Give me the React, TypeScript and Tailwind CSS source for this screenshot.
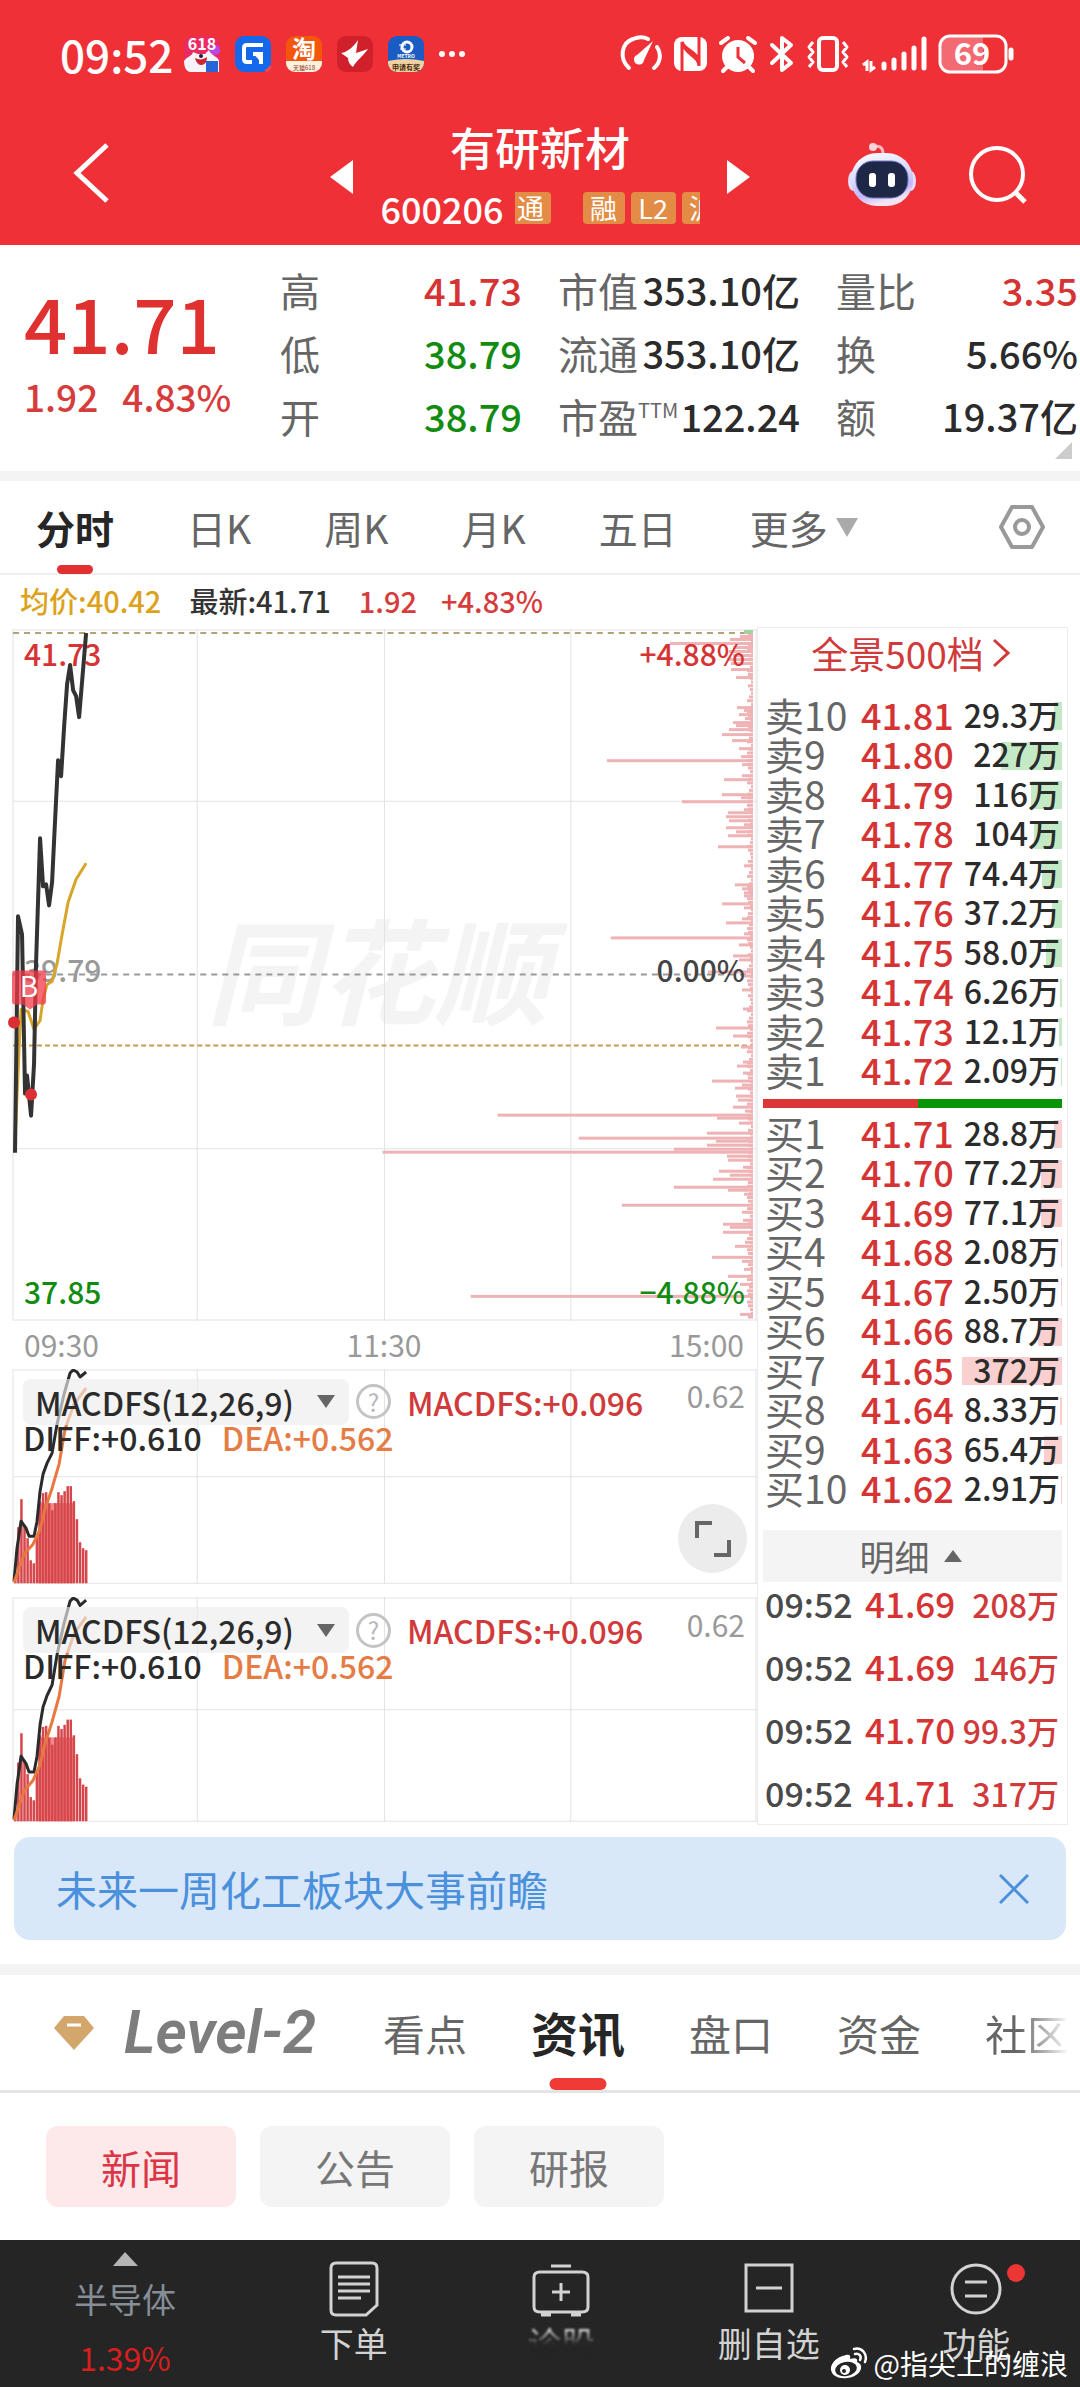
import React from "react";

/* ---------- data ---------- */

type Tone = "up" | "down" | "ink";

const toneClass: Record<Tone, string> = {
  up: "text-[#d63434]",
  down: "text-[#118c11]",
  ink: "text-[#2b2b2b]",
};

const stats: { label: string; sup?: string; value: string; tone: Tone }[][] = [
  [
    { label: "高", value: "41.73", tone: "up" },
    { label: "低", value: "38.79", tone: "down" },
    { label: "开", value: "38.79", tone: "down" },
  ],
  [
    { label: "市值", value: "353.10亿", tone: "ink" },
    { label: "流通", value: "353.10亿", tone: "ink" },
    { label: "市盈", sup: "TTM", value: "122.24", tone: "ink" },
  ],
  [
    { label: "量比", value: "3.35", tone: "up" },
    { label: "换", value: "5.66%", tone: "ink" },
    { label: "额", value: "19.37亿", tone: "ink" },
  ],
];

type Order = [string, string, string];

const asks: Order[] = [
  ["卖10", "41.81", "29.3"],
  ["卖9", "41.80", "227"],
  ["卖8", "41.79", "116"],
  ["卖7", "41.78", "104"],
  ["卖6", "41.77", "74.4"],
  ["卖5", "41.76", "37.2"],
  ["卖4", "41.75", "58.0"],
  ["卖3", "41.74", "6.26"],
  ["卖2", "41.73", "12.1"],
  ["卖1", "41.72", "2.09"],
];

const bids: Order[] = [
  ["买1", "41.71", "28.8"],
  ["买2", "41.70", "77.2"],
  ["买3", "41.69", "77.1"],
  ["买4", "41.68", "2.08"],
  ["买5", "41.67", "2.50"],
  ["买6", "41.66", "88.7"],
  ["买7", "41.65", "372"],
  ["买8", "41.64", "8.33"],
  ["买9", "41.63", "65.4"],
  ["买10", "41.62", "2.91"],
];

const trades: Order[] = [
  ["09:52", "41.69", "208"],
  ["09:52", "41.69", "146"],
  ["09:52", "41.70", "99.3"],
  ["09:52", "41.71", "317"],
];

/* Price-level turnover: [y, length] inside the 756 x 691 chart. */
const profile: [number, number][] = [
  [7, 13], [10, 23], [14, 83], [18, 20], [22, 24], [26, 20], [30, 26], [34, 22], [40, 22], [48, 17],
  [78, 16], [81, 9], [85, 14], [89, 8], [93, 20], [96, 17], [100, 24], [105, 31], [111, 21], [119, 14],
  [127, 12], [131, 146], [135, 11], [146, 11], [150, 29], [165, 31], [168, 12], [172, 71], [180, 9],
  [183, 25], [187, 27], [191, 24], [195, 9], [198, 27], [202, 17], [206, 25], [217, 35], [236, 9],
  [255, 18], [259, 11], [263, 9], [266, 9], [274, 31], [278, 9], [289, 11], [293, 27], [304, 9],
  [308, 142], [315, 14], [326, 20], [330, 14], [342, 45], [346, 10], [360, 11], [379, 10], [398, 37],
  [406, 20], [417, 12], [432, 10], [436, 16], [443, 10], [451, 41], [455, 11], [458, 18], [466, 17],
  [470, 15], [477, 20], [481, 8], [485, 255], [488, 36], [493, 14], [503, 46], [508, 174], [511, 37],
  [515, 46], [519, 79], [522, 370], [526, 26], [530, 25], [537, 10], [541, 34], [545, 23], [549, 40],
  [557, 79], [560, 25], [564, 9], [575, 131], [582, 11], [590, 10], [594, 30], [597, 23], [602, 30],
  [612, 8], [616, 18], [627, 41], [631, 11], [639, 9], [646, 25], [654, 13], [666, 282], [684, 13],
];

const minorLengths = [5, 3, 6, 2, 5, 4, 3, 6, 2];

const macdTops = [
  207, 158, 130, 156, 169, 191, 194, 168, 132, 124, 123, 134, 141, 134, 123, 126, 122, 117, 117, 132,
  150, 173, 179, 181,
];

/* ---------- small icons ---------- */

function StatusIcons() {
  return (
    <svg viewBox="0 0 394 40" className="h-10 w-[394px] shrink-0 overflow-visible" fill="none" stroke="white" aria-hidden="true">
      {/* speed gauge */}
      <path d="M9 34C-1 25 1 9 13 5C18 3 24 3 28 5M37 13C42 21 40 29 34 34" strokeWidth="4" strokeLinecap="round" />
      <path d="M33 7L24 26A5 5 0 1 1 17 21Z" fill="white" stroke="none" />
      {/* nfc */}
      <rect x="54" y="3" width="33" height="34" rx="8" fill="white" stroke="none" />
      <path d="M62 37V8C66 18 79 16 79 32M79 3V32M62 8C66 22 79 22 79 32" stroke="#f03037" strokeWidth="3" />
      {/* alarm */}
      <circle cx="118" cy="22" r="16" fill="white" stroke="none" />
      <path d="M101 9L108 4M135 9L128 4M107 33L103 37M129 33L133 37" strokeWidth="4" strokeLinecap="round" />
      <path d="M118 13V23L125 29" stroke="#f03037" strokeWidth="3" />
      {/* bluetooth */}
      <path d="M152 11L171 29L162 36V4L171 11L152 29" strokeWidth="4" strokeLinejoin="round" strokeLinecap="round" />
      {/* vibrate */}
      <rect x="199" y="4" width="18" height="32" rx="4" strokeWidth="4" />
      <path d="M193 8L189 13L193 18L189 23L193 28L189 33M223 8L227 13L223 18L227 23L223 28L227 33" strokeWidth="3" strokeLinejoin="round" />
      {/* data arrows and signal bars */}
      <path d="M243 31L247 28V37M251 27V36L255 33" strokeWidth="3" />
      <path d="M264 30V34M274 26V34M284 20V34M294 14V34M304 5V34" strokeWidth="5" strokeLinecap="round" />
      {/* battery */}
      <path d="M330 3H363V37H330A9 9 0 0 1 321 28V12A9 9 0 0 1 330 3Z" fill="#f46a72" stroke="none" />
      <rect x="320" y="2" width="66" height="36" rx="10" strokeWidth="3" />
      <path d="M391 16V24" strokeWidth="5" strokeLinecap="round" />
      <text x="352" y="31" textAnchor="middle" fill="white" stroke="none" fontSize="31" fontWeight="700">69</text>
    </svg>
  );
}

function AppBadges() {
  return (
    <div className="flex items-center gap-[15px]" aria-hidden="true">
      <svg viewBox="0 0 36 36" className="size-9 overflow-visible">
        <rect width="36" height="36" rx="9" fill="#ec2a62" />
        <circle cx="31" cy="14" r="5" fill="#b847e8" />
        <path d="M0 25C4 20 8 20 9 16L14 18H21L25 14C27 20 34 20 35 25V36H6C2 35 0 31 0 25Z" fill="#f7f3f8" />
        <text x="18" y="14" textAnchor="middle" fill="white" fontSize="16" fontWeight="700">618</text>
        <path d="M11 22C15 24 19 24 23 21C23 27 20 29 17 29C14 29 12 26 11 22Z" fill="#cf2434" />
        <circle cx="17" cy="20" r="2" fill="#222" />
        <rect x="22" y="25" width="12" height="11" fill="#2667d8" />
      </svg>
      <svg viewBox="0 0 36 36" className="size-9">
        <rect width="36" height="36" rx="9" fill="#1568ea" />
        <path d="M28 9H12Q9 9 9 12V23Q9 26 12 26H17M18 18H26V28" fill="none" stroke="white" strokeWidth="4" />
        <path d="M18 17H24V24Z" fill="white" />
        <path d="M29 35L36 29V33L33 36Z" fill="#f04755" />
      </svg>
      <svg viewBox="0 0 36 36" className="size-9 overflow-visible">
        <rect width="36" height="36" rx="9" fill="#f4560c" />
        <path d="M0 25H36V27A9 9 0 0 1 27 36H9A9 9 0 0 1 0 27Z" fill="#fff1df" />
        <text x="18" y="22" textAnchor="middle" fill="white" fontSize="24" fontWeight="700">淘</text>
        <text x="18" y="34" textAnchor="middle" fill="#8a3a1c" fontSize="6">天猫618</text>
      </svg>
      <svg viewBox="0 0 36 36" className="size-9">
        <rect width="36" height="36" rx="9" fill="#d0202c" />
        <path d="M21 4L19 17L31 13C26 20 19 25 16 31C13 29 11 26 11 22L4 17C11 16 17 10 21 4Z" fill="white" />
      </svg>
      <svg viewBox="0 0 36 36" className="size-9 overflow-visible">
        <rect width="36" height="36" rx="9" fill="#1a5cc4" />
        <path d="M0 25Q18 21 36 25V27A9 9 0 0 1 27 36H9A9 9 0 0 1 0 27Z" fill="#f0d2a0" />
        <circle cx="19" cy="11" r="5" fill="none" stroke="white" strokeWidth="3" />
        <path d="M11 9H18M12 13H18" stroke="white" strokeWidth="1" />
        <text x="18" y="22" textAnchor="middle" fill="white" fontSize="5" fontWeight="700">METRO</text>
        <text x="18" y="34" textAnchor="middle" fill="#4a2c10" fontSize="7" fontWeight="700">申请有奖</text>
      </svg>
      <svg viewBox="0 0 26 6" className="h-[6px] w-[26px]" fill="white">
        <circle cx="3" cy="3" r="3" />
        <circle cx="13" cy="3" r="3" />
        <circle cx="23" cy="3" r="3" />
      </svg>
    </div>
  );
}

function Robot() {
  return (
    <svg viewBox="0 0 70 66" className="h-[66px] w-[70px]" aria-hidden="true">
      <defs>
        <linearGradient id="shell" x1="0" y1="0" x2="0.3" y2="1">
          <stop offset="0" stopColor="#ffffff" />
          <stop offset="0.5" stopColor="#d9dcff" />
          <stop offset="0.8" stopColor="#c3b5f5" />
          <stop offset="1" stopColor="#f3e4f4" />
        </linearGradient>
      </defs>
      <path d="M25 5C32 3 36 5 36 12" fill="none" stroke="#f7b9c2" strokeWidth="3" />
      <circle cx="26" cy="5" r="4" fill="#fbd5da" />
      <ellipse cx="6" cy="39" rx="5" ry="10" fill="#e3dcfb" />
      <ellipse cx="64" cy="39" rx="5" ry="10" fill="#e3dcfb" />
      <rect x="4" y="11" width="62" height="53" rx="26" fill="url(#shell)" />
      <rect x="9" y="19" width="52" height="37" rx="17" fill="#1f2747" stroke="#6f78c8" strokeWidth="1" />
      <rect x="22" y="31" width="7" height="14" rx="3" fill="white" />
      <rect x="41" y="31" width="7" height="14" rx="3" fill="white" />
    </svg>
  );
}

/* ---------- sections ---------- */

function Header() {
  return (
    <header className="bg-[#f03037] text-white">
      <div className="flex h-[108px] items-center justify-between pr-[66px] pl-[60px]">
        <div className="flex items-center gap-[11px]">
          <span className="text-[44px] leading-[44px] font-medium">09:52</span>
          <AppBadges />
        </div>
        <StatusIcons />
      </div>
      <div className="grid h-[137px] grid-cols-[1fr_420px_1fr] items-center">
        <button aria-label="返回" className="justify-self-start pb-2 pl-[72px]">
          <svg viewBox="0 0 38 60" className="h-[60px] w-[38px]" fill="none" stroke="white" strokeWidth="5">
            <path d="M35 2L5 30L35 58" />
          </svg>
        </button>
        <div className="flex items-center justify-between">
          <button aria-label="上一只">
            <svg viewBox="0 0 23 34" className="h-[34px] w-[23px]" fill="white">
              <path d="M23 0V34L0 17Z" />
            </svg>
          </button>
          <div className="flex flex-col items-center pb-1">
            <h1 className="text-[45px] leading-[66px] font-medium">有研新材</h1>
            <div className="flex items-center gap-[11px]">
              <span className="text-[36px] leading-[56px] font-medium">600206</span>
              <div className="flex w-[185px] overflow-hidden text-[27px] leading-8 text-white">
                <span className="-ml-1 w-10 shrink-0 rounded-sm bg-[#e38c45] text-center">通</span>
                <span className="ml-8 w-[42px] shrink-0 rounded-sm bg-[#e38c45] text-center">融</span>
                <span className="ml-[6px] w-[45px] shrink-0 rounded-sm bg-[#e38c45] text-center">L2</span>
                <span className="ml-[6px] w-[42px] shrink-0 rounded-sm bg-[#e38c45] text-center">沪</span>
              </div>
            </div>
          </div>
          <button aria-label="下一只">
            <svg viewBox="0 0 23 34" className="h-[34px] w-[23px]" fill="white">
              <path d="M0 0V34L23 17Z" />
            </svg>
          </button>
        </div>
        <div className="flex items-center justify-end gap-[52px] pr-[53px] pb-1">
          <button aria-label="智能助手"><Robot /></button>
          <button aria-label="搜索">
            <svg viewBox="0 0 58 58" className="size-[58px]" fill="none" stroke="white" strokeWidth="4">
              <circle cx="28" cy="28" r="26" />
              <path d="M46 46L56 56" strokeWidth="5" />
            </svg>
          </button>
        </div>
      </div>
    </header>
  );
}

function Quote() {
  return (
    <section className="relative flex gap-9 border-b-10 border-[#f4f4f4] pt-[13px] pr-[2px] pb-6">
      <div className="w-[244px] shrink-0 pt-[25px] pl-6 font-medium whitespace-nowrap">
        <div className="text-[76px] leading-[76px] text-[#e03131]">41.71</div>
        <div className="mt-[17px] flex gap-6 text-[37px] leading-10 text-[#d63c3c]">
          <span>1.92</span>
          <span>4.83%</span>
        </div>
      </div>
      {stats.map((col, i) => (
        <dl key={i} className="flex-1">
          {col.map((s) => (
            <div key={s.label} className="flex h-[63px] items-center justify-between whitespace-nowrap">
              <dt className="flex text-[40px] text-[#666]">
                {s.label}
                {s.sup && <sup className="top-0 pt-3 text-[20px] leading-6">{s.sup}</sup>}
              </dt>
              <dd className={`text-[38px] font-medium ${toneClass[s.tone]}`}>{s.value}</dd>
            </div>
          ))}
        </dl>
      ))}
      <svg viewBox="0 0 17 17" className="absolute right-2 bottom-3 size-[17px]" fill="#ccc" aria-hidden="true">
        <path d="M17 0V17H0Z" />
      </svg>
    </section>
  );
}

function PeriodTabs() {
  return (
    <nav className="flex h-[94px] items-center gap-[73px] border-b-2 border-[#efefef] pr-[34px] pl-9 text-[39px] whitespace-nowrap text-[#666]">
      <button className="relative flex h-full items-center font-bold text-[#262626]">
        分时
        <span className="absolute bottom-[-1px] left-1/2 h-[9px] w-9 -translate-x-1/2 rounded-full bg-[#e23030]" />
      </button>
      <button>日K</button>
      <button>周K</button>
      <button>月K</button>
      <button>五日</button>
      <button className="flex items-center gap-2">
        更多
        <svg viewBox="0 0 22 19" className="h-[19px] w-[22px]" fill="#aaa" aria-hidden="true">
          <path d="M0 0H22L11 19Z" />
        </svg>
      </button>
      <button aria-label="设置" className="ml-auto">
        <svg viewBox="0 0 48 46" className="h-[46px] w-12" fill="none" stroke="#999" strokeWidth="4" strokeLinejoin="round">
          <path d="M14 3H34L45 23L34 43H14L3 23Z" />
          <circle cx="24" cy="23" r="7" />
        </svg>
      </button>
    </nav>
  );
}

function Legend() {
  return (
    <div className="flex h-[52px] items-center gap-6 pl-5 text-[29px] font-medium">
      <span className="mr-1 text-[#dca21c]">均价:40.42</span>
      <span className="mr-1 text-[#333]">最新:41.71</span>
      <span className="text-[#d63c3c]">1.92</span>
      <span className="text-[#d63c3c]">+4.83%</span>
    </div>
  );
}

function PriceChart() {
  const minor = Array.from({ length: 184 }, (_, i) => ({
    y: 4 + i * 3.73,
    w: minorLengths[(i * 5 + (i % 4)) % minorLengths.length],
  }));
  return (
    <div className="relative">
      <div className="absolute inset-0 flex flex-col justify-between pt-1 pb-[10px] pl-6 text-[30px] leading-10 font-medium">
        <span className="text-[#d63434]">41.73</span>
        <span className="pb-[6px] text-[#999]">39.79</span>
        <span className="text-[#118c11]">37.85</span>
      </div>
      <svg viewBox="0 0 756 691" className="relative block h-auto w-full" fill="none" role="img" aria-label="分时走势">
        <text x="206" y="386" fontSize="114" fontWeight="700" fontStyle="italic" fill="#f4f4f4">同花顺</text>
        <path d="M13 1H756M13 172H756M13 519H756M13 690H756M13 0V691M197 0V691M384 0V691M570 0V691M755 0V691" stroke="#e3e3e3" strokeWidth="1" />
        <path d="M13 4H752" stroke="#b5a177" strokeWidth="2" strokeDasharray="6 5" />
        <path d="M13 345H752" stroke="#999" strokeWidth="2" strokeDasharray="6 5" />
        <path d="M13 416H752" stroke="#c99a55" strokeWidth="2" strokeDasharray="5 3" />
        <g fill="#efb3b5">
          {minor.map((b) => (
            <rect key={b.y} x={752 - b.w} y={b.y - 1} width={b.w} height="3" />
          ))}
          {profile.map(([y, w]) => (
            <rect key={y} x={752 - w} y={y - 1} width={w} height="3" />
          ))}
        </g>
        <rect x="743" y="1" width="9" height="4" fill="#a5cf9f" />
        <path
          d="M15 512L19 420L21 380L28 382L34 400L40 391L43 370L47 355L52 352L57 334L62 305L68 273L76 250L86 234"
          stroke="#d8a52b" strokeWidth="3" strokeLinejoin="round"
        />
        <path
          d="M15 523L18 287L22 305L25 464L27 446L31 486L34 434L36 334L40 209L43 257L46 255L49 276L52 253L55 191L58 131L61 147L64 98L67 55L70 36L73 61L76 67L79 88L82 52L86 4"
          stroke="#333" strokeWidth="4" strokeLinejoin="round"
        />
        <path d="M15 341H43Q46 341 46 344V372Q46 375 43 375H37L30 380L23 375H15Q12 375 12 372V344Q12 341 15 341Z" fill="#f03a48" fillOpacity="0.75" />
        <text x="29" y="368" textAnchor="middle" fontSize="28" fill="white">B</text>
        <circle cx="14" cy="393" r="6" fill="#d92f35" />
        <circle cx="31" cy="465" r="6" fill="#d92f35" />
      </svg>
      <div className="absolute inset-0 flex flex-col items-end justify-between pt-1 pr-[12px] pb-[10px] text-[30px] leading-10 font-medium">
        <span className="text-[#d63434]">+4.88%</span>
        <span className="pb-[6px] text-[#444]">0.00%</span>
        <span className="text-[#118c11]">−4.88%</span>
      </div>
    </div>
  );
}

function MacdChart({ height }: { height: number }) {
  const k = height / 215;
  return (
    <div className="relative">
      <svg viewBox={`0 0 756 ${height}`} className="block h-auto w-full" fill="none" role="img" aria-label="MACDFS">
        <path
          d={`M13 1H756M13 ${height / 2}H756M13 ${height - 1}H756M13 0V${height}M197 0V${height}M384 0V${height}M570 0V${height}M755 0V${height}`}
          stroke="#e3e3e3"
        />
        <g transform={`scale(1 ${k})`}>
          <rect x="38" y="134" width="36" height="80" fill="#f0898b" />
          {macdTops.map((t, i) => (
            <rect key={i} x={14 + i * 3.08} y={t} width="2.5" height={214 - t} fill="#d6474b" />
          ))}
          <path
            d="M14 212L17 179L21 152L26 159L29 167L34 167L37 152L40 122L43 105L47 94L52 84L57 55L64 25L70 4L73 1L77 3L80 8L86 3"
            stroke="#2b2b2b" strokeWidth="3" strokeLinejoin="round"
          />
          <path
            d="M14 213L24 185L33 175L40 160L45 140L52 119L59 95L65 60L74 35L86 19"
            stroke="#e87840" strokeWidth="3" strokeLinejoin="round"
          />
        </g>
      </svg>
      <div className="absolute inset-x-0 top-[10px] pl-[23px] text-[32px] font-medium whitespace-nowrap">
        <div className="flex h-[46px] items-center">
          <button className="flex h-full w-[326px] items-center justify-between rounded-lg bg-[#ececec]/65 pr-[14px] pl-3 text-[#2b2b2b]">
            MACDFS(12,26,9)
            <svg viewBox="0 0 18 13" className="h-[13px] w-[18px]" fill="#666" aria-hidden="true">
              <path d="M0 0H18L9 13Z" />
            </svg>
          </button>
          <button aria-label="指标说明" className="ml-[7px] size-[35px] shrink-0 rounded-full border-3 border-[#c4c4c4] text-[24px] leading-[28px] font-normal text-[#b5b5b5]">
            ?
          </button>
          <span className="ml-4 text-[#d03a3a]">MACDFS:+0.096</span>
          <span className="mr-[12px] ml-auto pb-3 text-[30px] font-normal text-[#999]">0.62</span>
        </div>
        <div className="flex gap-5 leading-6">
          <span className="text-[#2b2b2b]">DIFF:+0.610</span>
          <span className="text-[#e57b45]">DEA:+0.562</span>
        </div>
      </div>
    </div>
  );
}

function OrderTable({ rows, tint }: { rows: Order[]; tint: string }) {
  return (
    <table className="h-[395px] w-full table-fixed whitespace-nowrap">
      <tbody>
        {rows.map(([level, price, qty]) => (
          <tr key={level}>
            <th scope="row" className="w-[98px] p-0 pl-[2px] text-left text-[39px] leading-9 font-normal text-[#666]">{level}</th>
            <td className="w-[96px] p-0 text-[36px] leading-9 font-medium text-[#d63434]">{price}</td>
            <td className="relative p-0 pr-[2px] text-right text-[32px] leading-9 font-medium text-[#2b2b2b]">
              <span
                className={`absolute top-2 right-0 h-7 ${tint}`}
                style={{ width: `${Math.round(parseFloat(qty) * 0.27)}px` }}
              />
              <span className="relative">{qty}万</span>
            </td>
          </tr>
        ))}
      </tbody>
    </table>
  );
}

function OrderBook() {
  return (
    <aside className="mr-3 w-[311px] shrink-0 border border-[#ececec] px-[5px]">
      <a href="#depth" className="flex h-[66px] items-center justify-center gap-2 pr-1 pb-4 text-[37px] leading-[50px] text-[#d03a3a]">
        全景500档
        <svg viewBox="0 0 18 30" className="h-[30px] w-[18px]" fill="none" stroke="#d03a3a" strokeWidth="3" aria-hidden="true">
          <path d="M2 2L16 15L2 28" />
        </svg>
      </a>
      <OrderTable rows={asks} tint="bg-[#c3eac5]" />
      <div className="mt-[10px] mb-[4px] flex h-[9px]">
        <div className="w-[52%] bg-[#dc3535]" />
        <div className="flex-1 bg-[#079407]" />
      </div>
      <OrderTable rows={bids} tint="bg-[#f9cfd0]" />
      <button className="mt-[23px] flex h-[52px] w-full items-center justify-center gap-[14px] bg-[#f4f4f4] pr-1 text-[35px] text-[#666]">
        明细
        <svg viewBox="0 0 18 12" className="h-3 w-[18px]" fill="#666" aria-hidden="true">
          <path d="M0 12H18L9 0Z" />
        </svg>
      </button>
      <table className="-mt-[10px] w-full table-fixed font-medium whitespace-nowrap">
        <tbody>
          {trades.map(([time, price, qty], i) => (
            <tr key={i} className="h-[63px]">
              <td className="w-[102px] p-0 pl-[2px] text-[34px] text-[#4a4a4a]">{time}</td>
              <td className="w-[93px] p-0 text-[35px] text-[#d63434]">{price}</td>
              <td className="p-0 pr-[3px] text-right text-[32px] text-[#d03a3a]">{qty}万</td>
            </tr>
          ))}
        </tbody>
      </table>
    </aside>
  );
}

function Market() {
  return (
    <section className="flex">
      <div className="min-w-0 flex-1 pt-[2px]">
        <PriceChart />
        <div className="flex h-12 items-center justify-between pr-[13px] pl-6 text-[30px] text-[#999]">
          <span>09:30</span>
          <span>11:30</span>
          <span>15:00</span>
        </div>
        <div className="relative">
          <MacdChart height={215} />
          <button aria-label="全屏" className="absolute right-[10px] bottom-[11px] flex size-[69px] items-center justify-center rounded-full bg-[#ececec]">
            <svg viewBox="0 0 38 38" className="size-[38px]" fill="none" stroke="#666" strokeWidth="4" aria-hidden="true">
              <path d="M3 18V3H18M35 20V35H20" />
            </svg>
          </button>
        </div>
        <div className="mt-[13px]">
          <MacdChart height={225} />
        </div>
      </div>
      <OrderBook />
    </section>
  );
}

function Banner() {
  return (
    <div className="mx-[14px] mt-[12px] mb-6 flex h-[103px] items-center justify-between rounded-2xl bg-[#d9e8f9] pr-[37px] pl-[42px] text-[#4a90dc]">
      <a href="#chemicals" className="text-[41px]">未来一周化工板块大事前瞻</a>
      <button aria-label="关闭">
        <svg viewBox="0 0 30 30" className="size-[30px]" fill="none" stroke="#4a90dc" strokeWidth="3">
          <path d="M1 1L29 29M29 1L1 29" />
        </svg>
      </button>
    </div>
  );
}

function InfoTabs() {
  return (
    <nav className="flex h-[129px] items-center gap-16 overflow-hidden border-t-11 border-b-3 border-[#f4f4f4] border-b-[#e4e4e4] pl-[54px] text-[42px] whitespace-nowrap text-[#666]">
      <button className="flex w-[265px] shrink-0 items-center gap-[30px]">
        <svg viewBox="0 0 40 34" className="h-[34px] w-10 shrink-0" aria-hidden="true">
          <path d="M10 0H30L40 12L20 34L0 12Z" fill="#d3a66c" />
          <path d="M13 9H27" stroke="white" strokeWidth="3" />
        </svg>
        <span className="font-[Roboto] text-[60px] leading-[60px] font-semibold text-[#7d7d7d] italic">Level-2</span>
      </button>
      <button className="shrink-0">看点</button>
      <button className="relative flex h-full shrink-0 items-center text-[47px] font-bold text-[#262626]">
        资讯
        <span className="absolute bottom-0 left-1/2 h-3 w-[57px] -translate-x-1/2 rounded-full bg-[#f03a36]" />
      </button>
      <button className="shrink-0">盘口</button>
      <button className="shrink-0">资金</button>
      <button className="shrink-0 bg-linear-to-r from-[#666] from-40% to-white to-100% bg-clip-text text-transparent">社区</button>
    </nav>
  );
}

function Chips() {
  return (
    <div className="flex gap-6 px-[46px] pt-[33px] pb-[33px] text-[40px]">
      <button className="h-[81px] w-[190px] rounded-xl bg-[#fde8ea] text-[#dc3545]">新闻</button>
      <button className="h-[81px] w-[190px] rounded-xl bg-[#f4f4f4] text-[#777]">公告</button>
      <button className="h-[81px] w-[190px] rounded-xl bg-[#f4f4f4] text-[#777]">研报</button>
    </div>
  );
}

function BottomItem({ label, labelClass = "", children }: { label: string; labelClass?: string; children: React.ReactNode }) {
  return (
    <button className="flex flex-1 flex-col items-center pt-[21px]">
      <svg viewBox="0 0 58 56" className="h-14 w-[58px] overflow-visible" fill="none" stroke="#d2d2d2" strokeWidth="3" aria-hidden="true">
        {children}
      </svg>
      <span className={`mt-1 text-[34px] leading-[44px] text-[#d2d2d2] ${labelClass}`}>{label}</span>
    </button>
  );
}

function BottomBar() {
  return (
    <footer className="relative flex h-[148px] bg-[#252525] whitespace-nowrap">
      <button className="flex w-[250px] flex-col items-center pt-3">
        <svg viewBox="0 0 25 14" className="h-[14px] w-[25px]" fill="#b5b5b5" aria-hidden="true">
          <path d="M0 14H25L12 0Z" />
        </svg>
        <span className="mt-2 text-[34px] leading-[50px] text-[#858e96]">半导体</span>
        <span className="mt-2 text-[32px] leading-[50px] text-[#d81e1e]">1.39%</span>
      </button>
      <BottomItem label="下单">
        <path d="M11 2H47Q52 2 52 7V44L41 54H11Q6 54 6 49V7Q6 2 11 2Z" />
        <path d="M13 16H45M13 23H45M13 30H45M13 37H36" />
      </BottomItem>
      <BottomItem
        label="诊股"
        labelClass="bg-linear-to-b from-[#d2d2d2] from-20% to-[#252525] to-55% bg-clip-text text-transparent blur-[1px]"
      >
        <path d="M19 5H39M8 11H50Q56 11 56 16V46Q56 51 50 51H8Q2 51 2 46V16Q2 11 8 11ZM20 31H38M29 22V40" />
        <path d="M9 53H19M39 53H49" strokeWidth="5" />
      </BottomItem>
      <BottomItem label="删自选">
        <path d="M6 4H52V50H6ZM16 27H42" />
      </BottomItem>
      <BottomItem label="功能">
        <circle cx="29" cy="28" r="24" />
        <path d="M18 21H40M18 35H40" />
        <circle cx="69" cy="12" r="9" fill="#ec3636" stroke="none" />
      </BottomItem>
      <div className="absolute right-3 bottom-0 flex items-center gap-[6px] text-[28px] leading-[50px] text-white">
        <svg viewBox="0 0 38 32" className="h-8 w-[38px]" aria-hidden="true">
          <path d="M16 8C6 10 0 17 1 23C2 29 9 32 17 31C27 30 32 24 31 19C31 17 29 16 27 15C28 12 26 10 20 12C21 8 19 7 16 8Z" fill="white" />
          <ellipse cx="16" cy="22" rx="11" ry="7" fill="#252525" transform="rotate(-10 16 22)" />
          <circle cx="15" cy="23" r="5" fill="white" />
          <circle cx="14" cy="24" r="2" fill="#252525" />
          <path d="M24 2C32 0 38 7 35 15M25 7C29 6 32 9 30 13" fill="none" stroke="white" strokeWidth="2.5" strokeLinecap="round" />
        </svg>
        <span>@指尖上的缠浪</span>
      </div>
    </footer>
  );
}

export default function App() {
  return (
    <main className="w-full overflow-hidden bg-white font-['Noto_Sans_CJK_SC','Noto_Sans',sans-serif]">
      <Header />
      <Quote />
      <PeriodTabs />
      <Legend />
      <Market />
      <Banner />
      <InfoTabs />
      <Chips />
      <BottomBar />
    </main>
  );
}
